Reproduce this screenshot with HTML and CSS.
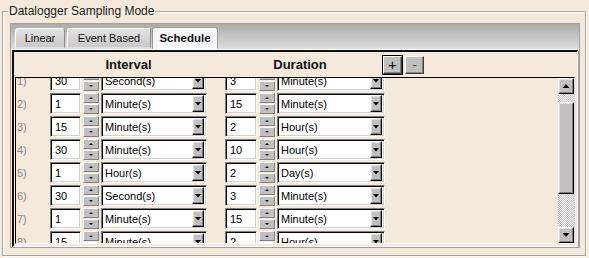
FILE: index.html
```html
<!doctype html>
<html>
<head>
    <title>Datalogger Sampling Mode</title>
    <meta charset="utf-8" />
    <link rel="stylesheet" href="styles.css">
</head>
<body>
	<fieldset class="frame">
		<legend>Datalogger Sampling Mode</legend>
		<div class="tabs">
			<div class="strip">
				<div class="tab t-lin">Linear</div>
				<div class="tab t-evt">Event Based</div>
				<div class="tab t-sch active">Schedule</div>
			</div>
			<div class="page">
				<div class="head">
					<div class="h-int">Interval</div>
					<div class="h-dur">Duration</div>
					<div class="pb def">+</div>
					<div class="pb minus">-</div>
				</div>
				<div class="list">
					<div class="rows">
						<div class="row first">
							<span class="num">1)</span>
							<span class="field val">30</span>
							<span class="spin"><i></i><i class="dn"></i></span>
							<span class="field combo">Second(s)<i class="drop"></i></span>
							<span class="field val dur">3</span>
							<span class="spin"><i></i><i class="dn"></i></span>
							<span class="field combo long">Minute(s)<i class="drop"></i></span>
						</div>
						<div class="row">
							<span class="num">2)</span>
							<span class="field val">1</span>
							<span class="spin"><i></i><i class="dn"></i></span>
							<span class="field combo">Minute(s)<i class="drop"></i></span>
							<span class="field val dur">15</span>
							<span class="spin"><i></i><i class="dn"></i></span>
							<span class="field combo long">Minute(s)<i class="drop"></i></span>
						</div>
						<div class="row">
							<span class="num">3)</span>
							<span class="field val">15</span>
							<span class="spin"><i></i><i class="dn"></i></span>
							<span class="field combo">Minute(s)<i class="drop"></i></span>
							<span class="field val dur">2</span>
							<span class="spin"><i></i><i class="dn"></i></span>
							<span class="field combo long">Hour(s)<i class="drop"></i></span>
						</div>
						<div class="row">
							<span class="num">4)</span>
							<span class="field val">30</span>
							<span class="spin"><i></i><i class="dn"></i></span>
							<span class="field combo">Minute(s)<i class="drop"></i></span>
							<span class="field val dur">10</span>
							<span class="spin"><i></i><i class="dn"></i></span>
							<span class="field combo long">Hour(s)<i class="drop"></i></span>
						</div>
						<div class="row">
							<span class="num">5)</span>
							<span class="field val">1</span>
							<span class="spin"><i></i><i class="dn"></i></span>
							<span class="field combo">Hour(s)<i class="drop"></i></span>
							<span class="field val dur">2</span>
							<span class="spin"><i></i><i class="dn"></i></span>
							<span class="field combo long">Day(s)<i class="drop"></i></span>
						</div>
						<div class="row">
							<span class="num">6)</span>
							<span class="field val">30</span>
							<span class="spin"><i></i><i class="dn"></i></span>
							<span class="field combo">Second(s)<i class="drop"></i></span>
							<span class="field val dur">3</span>
							<span class="spin"><i></i><i class="dn"></i></span>
							<span class="field combo long">Minute(s)<i class="drop"></i></span>
						</div>
						<div class="row">
							<span class="num">7)</span>
							<span class="field val">1</span>
							<span class="spin"><i></i><i class="dn"></i></span>
							<span class="field combo">Minute(s)<i class="drop"></i></span>
							<span class="field val dur">15</span>
							<span class="spin"><i></i><i class="dn"></i></span>
							<span class="field combo long">Minute(s)<i class="drop"></i></span>
						</div>
						<div class="row">
							<span class="num">8)</span>
							<span class="field val">15</span>
							<span class="spin"><i></i><i class="dn"></i></span>
							<span class="field combo">Minute(s)<i class="drop"></i></span>
							<span class="field val dur">2</span>
							<span class="spin"><i></i><i class="dn"></i></span>
							<span class="field combo long">Hour(s)<i class="drop"></i></span>
						</div>
					</div>
					<div class="sbar">
						<div class="sbtn up"></div>
						<div class="thumb"></div>
						<div class="sbtn down"></div>
					</div>
				</div>
			</div>
		</div>
	</fieldset>
</body>
</html>
```

FILE: styles.css
```css
* {
    box-sizing: border-box;
}
body {
    margin: 0;
    width: 589px;
    height: 258px;
    overflow: hidden;
    background-color: #f5e9db;
    font-family: "Liberation Sans", Arial, sans-serif;
    font-size: 11px;
    color: #000;
}
.frame {
    margin: 0 3px 0 2px;
    padding: 1px 5px 7px 7px;
    border: 1px solid #a3a3a3;
    box-shadow: inset 1px 1px #fff, 1px 1px #fff;
    min-width: 0;
}
.frame legend {
    margin-left: -2px;
    padding: 0 1px;
    font-size: 12px;
    line-height: 22px;
    color: #1a1a1a;
}
.tabs {
    height: 225px;
    border: 1px solid #a0a0a0;
    display: flex;
    flex-direction: column;
}
.strip {
    height: 26px;
    flex: none;
    border-bottom: 1px solid #fff;
    background: linear-gradient(#acacac, #dedede);
    display: flex;
    align-items: flex-end;
    padding-left: 4px;
}
.tab {
    height: 20px;
    margin-bottom: 1px;
    margin-right: 2px;
    border: 1px solid;
    border-color: #fff #8a8a8a transparent #fff;
    border-radius: 3px 3px 0 0;
    background: linear-gradient(#e2e2e2, #c9c9c9);
    display: flex;
    align-items: center;
    justify-content: center;
    color: #111;
}
.t-lin { width: 50px; }
.t-evt { width: 84px; margin-right: 1px; }
.t-sch { width: 66px; }
.tab.active {
    height: 22px;
    margin-bottom: 0;
    background: #f7f7f7;
    border-color: #9a9a9a #9a9a9a transparent #9a9a9a;
    font-weight: bold;
    font-size: 11.5px;
}
.page {
    flex: 1;
    margin: 0 1px;
    border-top: 2px solid #111;
    border-left: 2px solid #111;
    border-right: 1px solid #fff;
    border-bottom: 1px solid #fff;
    box-shadow: 1px 1px #a0a0a0;
    display: flex;
    flex-direction: column;
}
.head {
    height: 25px;
    flex: none;
    display: flex;
    align-items: center;
    padding-left: 36px;
    font-size: 13px;
    font-weight: bold;
    color: #111;
}
.h-int {
    width: 157px;
    text-align: center;
}
.h-dur {
    width: 150px;
    margin-left: 18px;
    text-align: center;
}
.pb {
    width: 19px;
    height: 18px;
    margin-left: 3px;
    background: #c0c0c0;
    border: 1px solid;
    border-color: #fff #404040 #404040 #fff;
    box-shadow: inset -1px -1px #808080;
    display: flex;
    align-items: center;
    justify-content: center;
    font-size: 15px;
    font-weight: normal;
    line-height: 1;
}
.pb.def {
    margin-left: 8px;
    outline: 1px solid #000;
}
.pb.minus {
    color: #7a5a1e;
}
.list {
    height: 167px;
    flex: none;
    margin: 0 2px 0 1px;
    border-top: 1px solid #000;
    border-left: 1px solid #000;
    border-bottom: 1px solid #fff;
    border-right: 1px solid #d8d8d8;
    display: flex;
}
.rows {
    flex: 1;
    overflow: hidden;
}
.row {
    height: 21px;
    margin-bottom: 2px;
    display: flex;
    align-items: center;
    gap: 2px;
}
.row.first {
    margin-top: -8px;
}
.num {
    width: 32px;
    padding-left: 1px;
    color: #8a8a8a;
}
.field {
    height: 21px;
    background: #fff;
    border: 1px solid;
    border-color: #808080 #fff #fff #808080;
    box-shadow: inset 1px 1px #000, inset -1px -1px #d4d0c8;
    display: flex;
    align-items: center;
}
.val {
    width: 31px;
    padding-left: 4px;
}
.dur {
    width: 32px;
    margin-left: 16px;
}
.spin {
    width: 16px;
    height: 21px;
    display: flex;
    flex-direction: column;
    gap: 1px;
}
.spin i {
    flex: 1;
    background: #c0c0c0;
    border: 1px solid;
    border-color: #fff #808080 #808080 #fff;
    display: flex;
    align-items: center;
    justify-content: center;
}
.spin i::after {
    content: "";
    width: 0;
    height: 0;
    border-left: 2px solid transparent;
    border-right: 2px solid transparent;
    border-bottom: 2px solid #000;
}
.spin i.dn::after {
    border-bottom: 0;
    border-top: 2px solid #000;
}
.combo {
    width: 106px;
    padding: 0 2px 0 3px;
    justify-content: space-between;
}
.combo.long {
    width: 108px;
}
.drop, .sbtn, .thumb {
    background: #c0c0c0;
    border: 1px solid;
    border-color: #fff #000 #000 #fff;
    box-shadow: inset -1px -1px #808080, inset 1px 1px #dfdfdf;
    display: flex;
    align-items: center;
    justify-content: center;
}
.drop {
    width: 12px;
    height: 17px;
}
.drop::after, .sbtn.down::after {
    content: "";
    width: 7px;
    height: 4px;
    background: #000;
    clip-path: polygon(0 0, 100% 0, 50% 100%);
}
.sbtn.up::after {
    content: "";
    width: 7px;
    height: 4px;
    background: #000;
    clip-path: polygon(50% 0, 100% 100%, 0 100%);
}
.sbar {
    width: 16px;
    flex: none;
    display: flex;
    flex-direction: column;
    background: repeating-conic-gradient(#c0c0c0 0 25%, #fff 0 50%) 0 0 / 2px 2px;
}
.sbtn {
    height: 16px;
}
.thumb {
    height: 92px;
    margin-top: 8px;
}
.sbtn.down {
    margin-top: auto;
}
```
